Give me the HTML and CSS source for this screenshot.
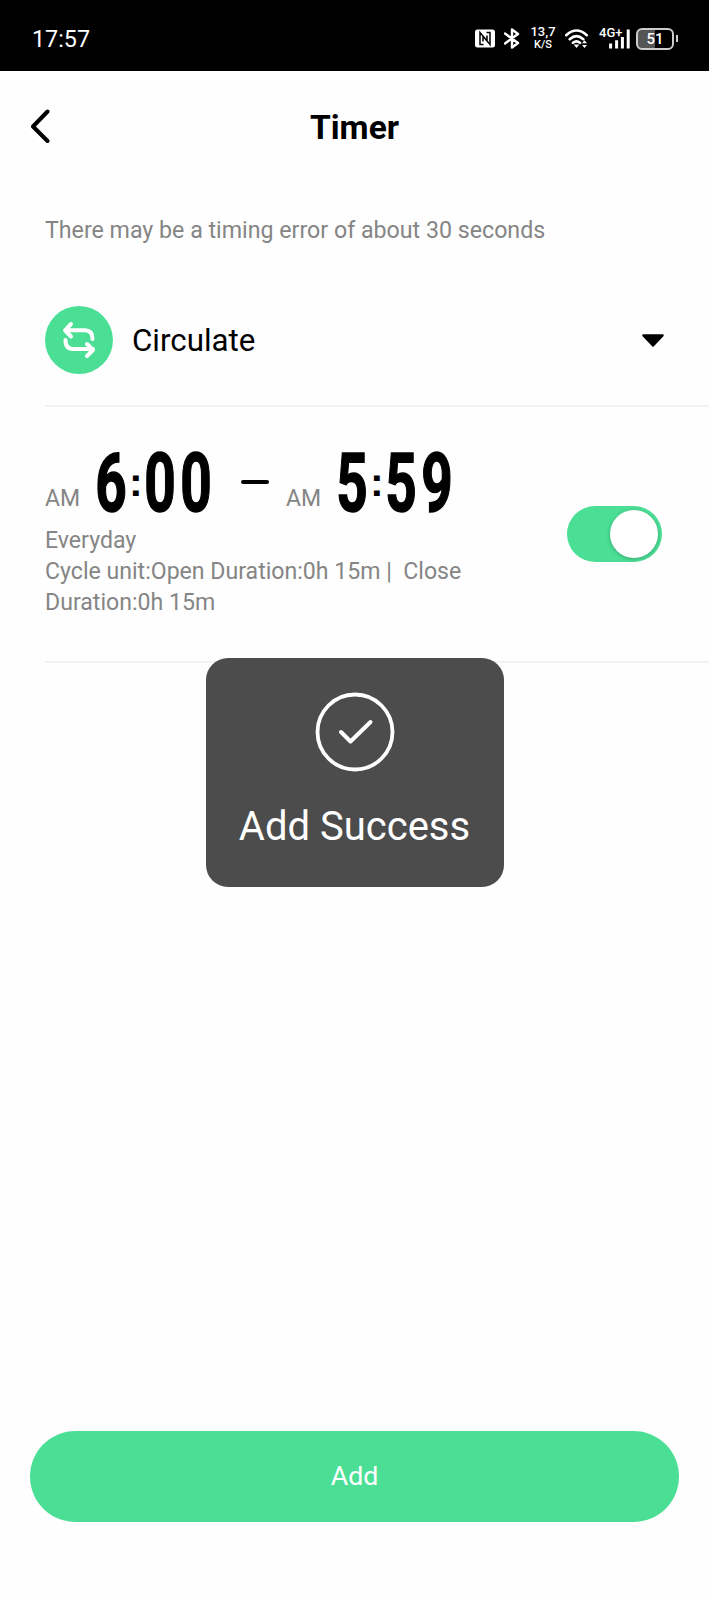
FILE: index.html
```
<!DOCTYPE html>
<html lang="en">
<head>
    <meta charset="UTF-8">
    <meta name="viewport" content="width=device-width, initial-scale=1.0">
    <title>Timer</title>
    <link rel="stylesheet" href="styles.css">
</head>
<body>
    <div class="status-bar">
        <span class="clock">17:57</span>
        <div class="status-icons">
            <svg class="nfc" width="20" height="19" viewBox="0 0 20 19">
                <rect x="0" y="0.5" width="20" height="18" rx="2.5" fill="#fff"/>
                <path d="M8.5 15.5H5V3.5L12 12V6.5M8 12.5V7L15 15.5V3.5H11.5" fill="none" stroke="#000" stroke-width="1.5"/>
            </svg>
            <svg class="bluetooth" width="16" height="21" viewBox="0 0 16 21">
                <path d="M1 5.5L14 15L8 19.5V1.5L14 6L1 15.5" fill="none" stroke="#fff" stroke-width="2.4" stroke-linejoin="round" stroke-linecap="round"/>
            </svg>
            <div class="speed"><span>13,7</span><span class="unit">K/S</span></div>
            <svg class="wifi" width="24" height="20" viewBox="0 0 24 20">
                <path d="M1.2 6.2Q11.5 -3.2 21.8 6.2M4.7 10.2Q11.5 4.2 18.3 10.2M8 13.8Q11.5 11 15 13.8" fill="none" stroke="#fff" stroke-width="2.6" stroke-linecap="round"/>
                <path d="M8.7 15.5H14.3L11.5 19ZM17 14.2L19.5 11.2L22 14.2ZM17 16L19.5 19L22 16Z" fill="#fff"/>
            </svg>
            <div class="signal">
                <span>4G+</span>
                <svg width="22" height="20" viewBox="0 0 22 20">
                    <path d="M1.6 19.5V14.5M7.6 19.5V11.2M13.4 19.5V8M19.2 19.5V0.5" stroke="#fff" stroke-width="3"/>
                </svg>
            </div>
            <div class="battery">51</div>
            <div class="battery-tip"></div>
        </div>
    </div>

    <div class="header">
        <svg class="back" width="20" height="35" viewBox="0 0 20 35">
            <path d="M16.5 2.5L2 17.5L16.5 32" fill="none" stroke="#000" stroke-width="4" stroke-linecap="round" stroke-linejoin="round"/>
        </svg>
        <h1>Timer</h1>
    </div>

    <p class="hint">There may be a timing error of about 30 seconds</p>

    <div class="mode">
        <div class="mode-icon">
            <svg width="34" height="38" viewBox="0 0 34 38">
                <path d="M9 3L3 9.3L9 15.5M3 9.3H23Q30.5 9.3 30.5 18M25 23L31 29L25 35M31 28H11Q3.5 28 3.5 19" fill="none" stroke="#fff" stroke-width="4" stroke-linecap="round" stroke-linejoin="round"/>
            </svg>
        </div>
        <span class="mode-name">Circulate</span>
        <svg width="22" height="13" viewBox="0 0 22 13">
            <path d="M1.5 1.5H20.5L11 11.5Z" stroke="#000" stroke-width="2.5" stroke-linejoin="round"/>
        </svg>
    </div>

    <div class="timer">
        <div class="info">
            <div class="range">
                <span class="ampm">AM</span>
                <div class="time"><span class="digit">6</span><span class="colon">:</span><span class="digit">0</span><span class="digit">0</span></div>
                <div class="dash"></div>
                <span class="ampm">AM</span>
                <div class="time"><span class="digit">5</span><span class="colon">:</span><span class="digit">5</span><span class="digit">9</span></div>
            </div>
            <p class="detail">Everyday<br>Cycle unit:Open Duration:0h 15m |&nbsp; Close<br>Duration:0h 15m</p>
        </div>
        <div class="toggle"><div class="knob"></div></div>
    </div>

    <button class="add">Add</button>

    <!-- Success toast -->
    <div class="toast">
        <svg width="80" height="80" viewBox="0 0 80 80">
            <circle cx="40" cy="40" r="37.5" fill="none" stroke="#fff" stroke-width="3.8"/>
            <path d="M26 40L35.5 49.5L55.5 30" fill="none" stroke="#fff" stroke-width="4" stroke-linecap="round" stroke-linejoin="round"/>
        </svg>
        <span>Add Success</span>
    </div>
</body>
</html>
```
FILE: styles.css
```
* {
    box-sizing: border-box;
}
body {
    margin: 0;
    height: 1600px;
    display: flex;
    flex-direction: column;
    background-color: #fefefe;
    font-family: Roboto, sans-serif;
    color: #000;
    overflow: hidden;
}
svg {
    display: block;
    flex: none;
}
.status-bar {
    height: 71px;
    padding: 6px 31px 0 32px;
    display: flex;
    align-items: center;
    justify-content: space-between;
    background-color: #000;
    color: #fff;
}
.clock {
    font-size: 23.3px;
    line-height: 30px;
}
.status-icons {
    display: flex;
    align-items: center;
}
.bluetooth {
    margin-left: 9px;
}
.speed {
    width: 26px;
    margin-left: 10px;
    display: flex;
    flex-direction: column;
    align-items: center;
    font-size: 13px;
    font-weight: 500;
    line-height: 11px;
}
.speed span {
    margin-top: -1px;
}
.speed .unit {
    margin-top: 2px;
    font-size: 11px;
    line-height: 11px;
}
.wifi {
    margin-left: 9px;
}
.signal {
    width: 32px;
    margin-left: 10px;
    display: flex;
}
.signal span {
    width: 10px;
    font-size: 13px;
    font-weight: 500;
    line-height: 8px;
    white-space: nowrap;
}
.battery {
    width: 38px;
    height: 22px;
    margin-left: 5px;
    border: 2px solid #ccc;
    border-radius: 6px;
    background: linear-gradient(to right, #555 51%, #000 51%);
    font-size: 15px;
    font-weight: 500;
    line-height: 18px;
    text-align: center;
}
.battery-tip {
    width: 2px;
    height: 7px;
    margin-left: 2px;
    background-color: #ccc;
}
.header {
    height: 110px;
    padding: 0 31px;
    display: grid;
    grid-template-columns: 20px 1fr 20px;
    align-items: center;
}
h1 {
    margin: 3px 0 0;
    font-size: 33.5px;
    font-weight: 700;
    line-height: 40px;
    text-align: center;
}
.hint {
    height: 92px;
    margin: 0;
    padding: 34px 0 0 45px;
    font-size: 23.2px;
    line-height: 30px;
    color: #858585;
}
.mode {
    height: 134px;
    margin-left: 45px;
    padding: 2px 45px 0 0;
    display: flex;
    align-items: center;
    border-bottom: 2px solid #f3f3f3;
}
.mode-icon {
    width: 68px;
    height: 68px;
    display: flex;
    align-items: center;
    justify-content: center;
    border-radius: 50%;
    background-color: #4bdf96;
}
.mode-name {
    flex: 1;
    margin-left: 19px;
    padding-top: 2px;
    font-size: 31.3px;
    line-height: 36px;
}
.timer {
    height: 256px;
    margin-left: 45px;
    padding-right: 47px;
    display: flex;
    justify-content: space-between;
    align-items: center;
    border-bottom: 2px solid #f3f3f3;
}
.info {
    height: 254px;
    padding-top: 36px;
    color: #858585;
}
.range {
    height: 80px;
    display: flex;
}
.ampm {
    width: 48px;
    padding-top: 41px;
    font-size: 23px;
    line-height: 30px;
}
.time {
    width: 126px;
    display: flex;
    color: #000;
}
.digit {
    width: 36px;
    display: flex;
    justify-content: center;
    font-size: 82px;
    font-weight: 700;
    line-height: 81px;
    -webkit-text-stroke: 1.5px #000;
    transform: scaleX(0.67);
}
.colon {
    width: 13px;
    font-family: "Liberation Sans", sans-serif;
    font-size: 41px;
    font-weight: 700;
    line-height: 78px;
}
.dash {
    width: 28px;
    height: 4px;
    margin: 37px 17px 0 22px;
    border-radius: 2px;
    background-color: #000;
}
.detail {
    margin: 2px 0 0;
    font-size: 23.1px;
    line-height: 31px;
}
.toggle {
    width: 95px;
    height: 56px;
    padding: 4px;
    display: flex;
    justify-content: flex-end;
    border-radius: 28px;
    background-color: #4bdf96;
}
.knob {
    width: 48px;
    height: 48px;
    border-radius: 50%;
    background-color: #fff;
    box-shadow: 0 1px 4px rgba(0,0,0,0.25);
}
.add {
    height: 91px;
    margin: auto 30px 78px;
    padding-bottom: 3px;
    border: none;
    border-radius: 46px;
    background-color: #4bdf96;
    color: #fff;
    font-family: inherit;
    font-size: 26.7px;
}
.toast {
    position: absolute;
    left: 205.5px;
    top: 658px;
    width: 298px;
    height: 229px;
    padding-top: 34px;
    display: flex;
    flex-direction: column;
    align-items: center;
    border-radius: 22px;
    background-color: #4c4c4c;
    color: #fff;
    font-size: 40px;
    line-height: 48px;
    white-space: nowrap;
}
.toast span {
    margin-top: 31px;
}
```
